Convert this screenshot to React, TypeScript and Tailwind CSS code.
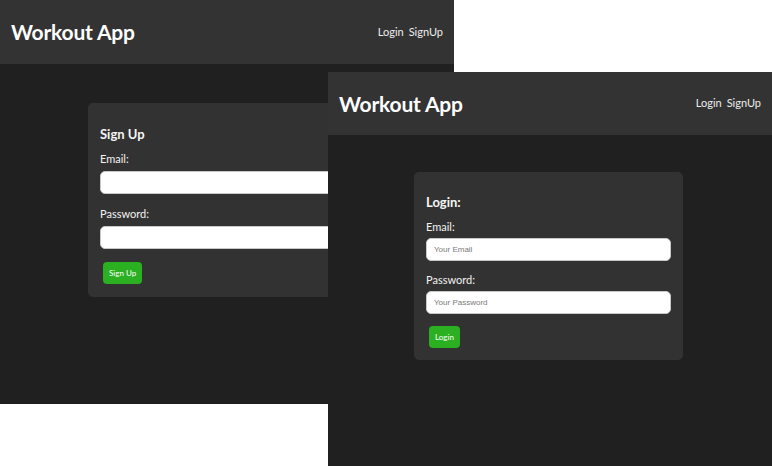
import React from 'react';

type FieldProps = {
    label: string;
    placeholder?: string;
    type?: string;
    first?: boolean;
    loose?: boolean;
};

function Field({ label, placeholder, type = 'text', first, loose }: FieldProps) {
    const top = first ? 'mt-[5px]' : loose ? 'mt-[10px]' : 'mt-[9px]';
    return (
        <div className={top}>
            <label className="block text-[11px] leading-[20px] text-[#f2f2f2]">{label}</label>
            <input
                type={type}
                placeholder={placeholder}
                className={`${loose ? 'mt-[2px]' : 'mt-[1px]'} block w-full h-[23px] px-[7px] bg-white border border-[#c8c8c8] rounded-[5px] text-[8px] text-[#333] placeholder:text-[#7a7a7a] font-['Liberation_Sans',Arial,sans-serif] outline-none`}
            />
        </div>
    );
}

type AuthCardProps = {
    title: string;
    button: string;
    placeholders?: boolean;
    loose?: boolean;
    className: string;
};

function AuthCard({ title, button, placeholders, loose, className }: AuthCardProps) {
    return (
        <form
            className={`bg-[#323232] rounded-[5px] px-[12px] ${loose ? 'pt-[21px] pb-[13px]' : 'pt-[20px] pb-[12px]'} ${className}`}
        >
            <h3 className="text-[13px] leading-[20px] font-bold text-[#f5f5f5]">{title}</h3>
            <Field label="Email:" placeholder={placeholders ? 'Your Email' : undefined} first loose={loose} />
            <Field
                label="Password:"
                type="password"
                placeholder={placeholders ? 'Your Password' : undefined}
                loose={loose}
            />
            <button
                type="button"
                className={`${loose ? 'mt-[13px]' : 'mt-[12px]'} ml-[3px] h-[22px] px-[6px] bg-[#2bb022] rounded-[4px] text-[8px] text-white`}
            >
                {button}
            </button>
        </form>
    );
}

function Window({ children, className, headerHeight }: { children: React.ReactNode; className: string; headerHeight: string }) {
    return (
        <div className={`absolute flex flex-col bg-[#202020] font-['Lato',sans-serif] overflow-hidden ${className}`}>
            {/* Header */}
            <header className={`${headerHeight} shrink-0 bg-[#333333] flex items-center justify-between px-[11px]`}>
                <h1 className="text-[21px] font-bold text-white tracking-[-0.2px]">Workout App</h1>
                <nav className="flex gap-[5px] text-[11px] text-[#eeeeee]">
                    <a>Login</a>
                    <a>SignUp</a>
                </nav>
            </header>
            <div className="flex-1">{children}</div>
        </div>
    );
}

export default function App() {
    return (
        <div className="relative w-[772px] h-[466px] bg-white overflow-hidden">
            <Window className="left-0 top-0 w-[454px] h-[404px]" headerHeight="h-[64px]">
                <AuthCard title="Sign Up" button="Sign Up" loose className="mt-[39px] ml-[88px] w-[278px]" />
            </Window>
            <Window className="left-[328px] top-[72px] w-[444px] h-[394px]" headerHeight="h-[63px]">
                <AuthCard title="Login:" button="Login" placeholders className="mt-[37px] ml-[86px] w-[269px]" />
            </Window>
        </div>
    );
}
